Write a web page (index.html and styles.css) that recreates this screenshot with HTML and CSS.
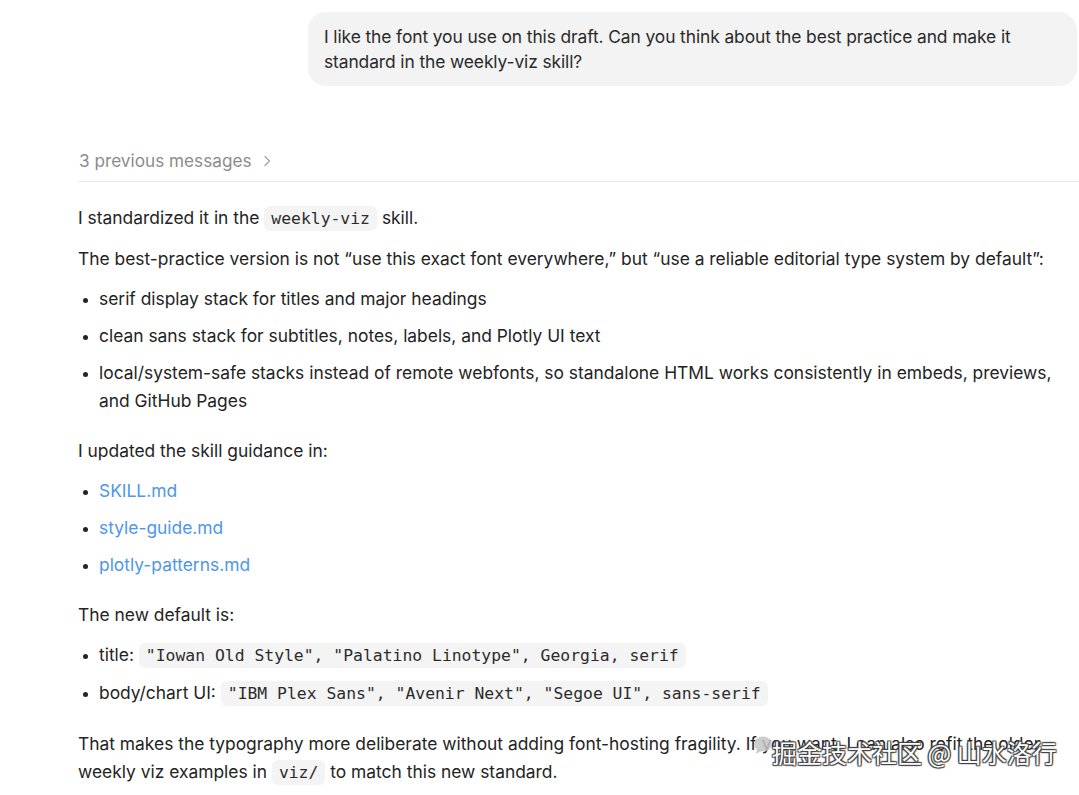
FILE: index.html
```html
<!DOCTYPE html>
<html>
<head>
<meta charset="utf-8">
<link rel="stylesheet" href="styles.css">
</head>
<body>
<div class="page">
  <div class="user-row">
    <div class="bubble">I like the font you use on this draft. Can you think about the best practice and make it standard in the weekly-viz skill?</div>
  </div>
  <div class="prev">
    <span>3 previous messages</span>
    <svg class="chev" width="10" height="12" viewBox="0 0 10 12"><path d="M3 1.5 L7.5 6 L3 10.5" fill="none" stroke="#a8a8a8" stroke-width="1.4" stroke-linecap="round" stroke-linejoin="round"/></svg>
  </div>
  <div class="answer">
    <p>I standardized it in the <code>weekly-viz</code> skill.</p>
    <p>The best-practice version is not “use this exact font everywhere,” but “use a reliable editorial type system by default”:</p>
    <ul>
      <li>serif display stack for titles and major headings</li>
      <li>clean sans stack for subtitles, notes, labels, and Plotly UI text</li>
      <li>local/system-safe stacks instead of remote webfonts, so standalone HTML works consistently in embeds, previews, and GitHub Pages</li>
    </ul>
    <p>I updated the skill guidance in:</p>
    <ul>
      <li><a>SKILL.md</a></li>
      <li><a>style-guide.md</a></li>
      <li><a>plotly-patterns.md</a></li>
    </ul>
    <p>The new default is:</p>
    <ul>
      <li>title: <code>"Iowan Old Style", "Palatino Linotype", Georgia, serif</code></li>
      <li>body/chart UI: <code>"IBM Plex Sans", "Avenir Next", "Segoe UI", sans-serif</code></li>
    </ul>
    <p class="last">That makes the typography more deliberate without adding font-hosting fragility. If you want, I can also refit the older weekly viz examples in <code>viz/</code> to match this new standard.</p>
  </div>
  <div class="watermark">
    <svg class="wm-icon" width="24" height="22" viewBox="0 0 24 22"><ellipse cx="11" cy="9" rx="9" ry="7.5" fill="#c4c4c4" opacity="0.85"/><path d="M5 14 L4 19 L10 15.5 Z" fill="#c4c4c4" opacity="0.85"/></svg>
    <span>掘金技术社区 @ 山水洛行</span>
  </div>
</div>
</body>
</html>
```
FILE: styles.css
```css
html, body {
  margin: 0;
  padding: 0;
  background: #ffffff;
}
.page {
  position: relative;
  width: 1079px;
  height: 795px;
  overflow: hidden;
  font-family: Inter, "Liberation Sans", sans-serif;
  color: #242424;
}
.user-row {
  display: flex;
  justify-content: flex-end;
  padding: 12px 2px 0 308px;
}
.bubble {
  background: #f3f3f3;
  border-radius: 18px;
  padding: 12px 16px 12px 16px;
  font-size: 17.4px;
  letter-spacing: -0.1px;
  line-height: 25px;
  color: #2a2a2a;
  width: 100%;
  box-sizing: border-box;
  height: 74px;
}
.prev {
  margin: 64px 0 0 78px;
  padding-bottom: 9px;
  border-bottom: 1px solid #ececec;
  display: flex;
  align-items: center;
  gap: 10px;
  font-size: 17.2px;
  line-height: 22px;
  color: #8c8c8c;
}
.prev span { padding-left: 1px; }
.answer {
  padding-left: 78px;
  padding-top: 22px;
  font-size: 17.4px;
  line-height: 28px;
}
.answer p {
  margin: 0 0 12px 0;
}
.answer ul {
  margin: 0 0 22px 0;
  padding-left: 21px;
}
.answer li {
  margin: 0 0 9px 0;
  padding-left: 0;
}
.answer li::marker {
  font-size: 14px;
}
.answer a {
  color: #4f96e8;
}
code {
  font-family: "DejaVu Sans Mono", "Liberation Mono", monospace;
  font-size: 16.4px;
  background: #f4f4f4;
  border-radius: 6px;
  padding: 3px 7px;
  color: #2c2c2c;
}
.watermark {
  position: absolute;
  left: 752px;
  top: 734px;
  display: flex;
  align-items: center;
  gap: 0px;
  font-family: "Noto Sans CJK SC", sans-serif;
  font-size: 25px;
  color: #ffffff;
  text-shadow: 0 0 1px #333, 1px 1px 1px #444, -1px -1px 1px #444, 1px -1px 1px #444, -1px 1px 1px #444;
}
.wm-icon {
  margin-bottom: 12px;
  margin-right: -4px;
}
```
